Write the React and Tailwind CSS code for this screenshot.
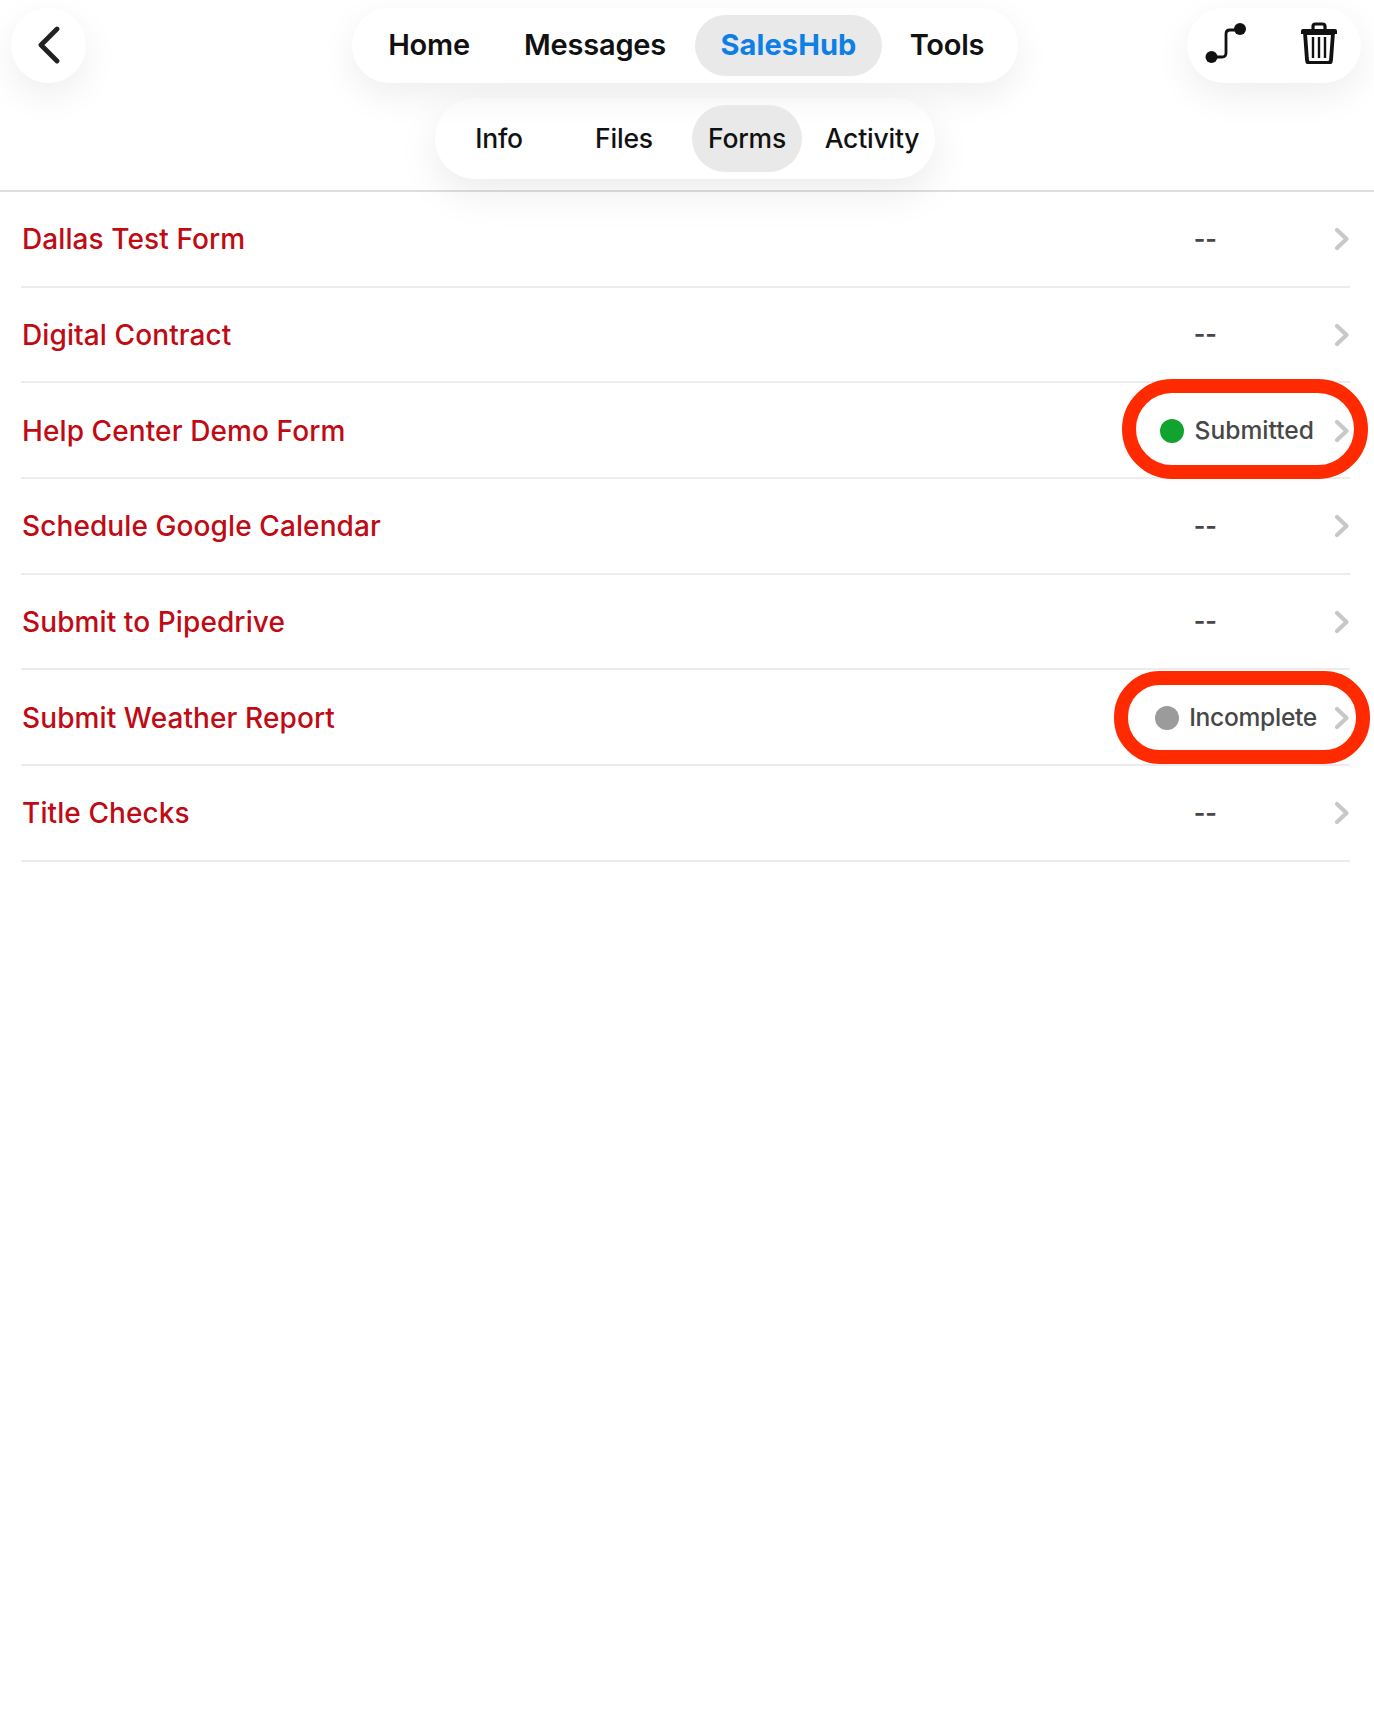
import React from "react";

const forms = [
  { name: "Dallas Test Form", status: null },
  { name: "Digital Contract", status: null },
  { name: "Help Center Demo Form", status: "Submitted", dot: "bg-[#10a32f]", gap: "mr-[20px]" },
  { name: "Schedule Google Calendar", status: null },
  { name: "Submit to Pipedrive", status: null },
  { name: "Submit Weather Report", status: "Incomplete", dot: "bg-[#9b9b9b] mr-[10px]", gap: "mr-[17px] tracking-[-0.3px]" },
  { name: "Title Checks", status: null },
];

const Chevron = () => (
  <svg width="16" height="24" viewBox="0 0 16 24" fill="none" className="shrink-0">
    <path d="M3 3 L12.5 12 L3 21" stroke="#c8c8c8" strokeWidth="4.2" strokeLinecap="round" strokeLinejoin="round" />
  </svg>
);

const RouteIcon = () => (
  <svg width="42" height="42" viewBox="0 0 42 42" fill="none">
    <circle cx="6.5" cy="35" r="6" fill="#111" />
    <circle cx="35" cy="7" r="6" fill="#111" />
    <path d="M6 35 H17 Q21 35 21 31 V12 Q21 8 25 8 H35" stroke="#111" strokeWidth="2.8" fill="none" />
  </svg>
);

const TrashIcon = () => (
  <svg width="38" height="42" viewBox="0 0 38 42" fill="none">
    <path d="M13 7 V4.5 Q13 2 15.5 2 H22.5 Q25 2 25 4.5 V7" stroke="#111" strokeWidth="3.2" />
    <path d="M1 9 Q1 7 3 7 H35 Q37 7 37 9 V12 H1 Z" fill="#111" />
    <path d="M5 11 H33 L31 38 Q30.8 41 28 41 H10 Q7.2 41 7 38 Z" stroke="#111" strokeWidth="3.8" fill="#fff" />
    <path d="M13 15 V36 M19 15 V36 M25 15 V36" stroke="#111" strokeWidth="2.4" />
  </svg>
);

export default function App() {
  return (
    <div className="relative min-h-[1730px] bg-white font-['Inter','Liberation_Sans',sans-serif] overflow-hidden">
      <header className="relative h-[192px] border-b-2 border-[#dedede]">
        <div className="flex items-start pt-2 pl-[11px]">
          <button className="flex h-[75px] w-[75px] items-center justify-center rounded-full bg-white pb-[2px] shadow-[0_12px_36px_rgba(0,0,0,0.07)]">
            <svg width="26" height="38" viewBox="0 0 26 38" fill="none">
              <path d="M21 3 L5 19 L21 35" stroke="#222" strokeWidth="4.8" strokeLinecap="round" strokeLinejoin="round" />
            </svg>
          </button>
          <nav className="ml-[266px] flex h-[75px] w-[666px] items-center rounded-[38px] bg-white pb-[1px] pl-[11px] text-[29px] font-semibold tracking-[-0.2px] text-[#111] shadow-[0_12px_36px_rgba(0,0,0,0.07)]">
            <span className="w-[132px] text-center">Home</span>
            <span className="w-[200px] text-center tracking-[-0.2px]">Messages</span>
            <span className="flex h-[61px] w-[187px] items-center justify-center rounded-[31px] bg-[#e9e9e9] font-bold tracking-[0.1px] text-[#0d7fe6]">SalesHub</span>
            <span className="w-[130px] text-center">Tools</span>
          </nav>
          <div className="ml-[169px] flex h-[75px] w-[174px] items-center rounded-[38px] bg-white pb-[5px] pl-[18px] shadow-[0_12px_36px_rgba(0,0,0,0.07)]">
            <RouteIcon />
            <span className="ml-[53px]"><TrashIcon /></span>
          </div>
        </div>
        <div className="ml-[435px] mt-[15px] flex h-[81px] w-[500px] items-center rounded-[40px] bg-white pl-[4px] text-[26.5px] font-medium tracking-[-0.2px] text-[#111] shadow-[0_14px_40px_rgba(0,0,0,0.08)]">
          <span className="w-[120px] text-center">Info</span>
          <span className="w-[130px] text-center">Files</span>
          <span className="ml-[3px] flex h-[67px] w-[110px] items-center justify-center rounded-[34px] bg-[#e9e9e9]">Forms</span>
          <span className="ml-[7px] w-[126px] text-center">Activity</span>
        </div>
      </header>

      <ul className="pl-[21px] pr-[24px]">
        {forms.map((form) => (
          <li key={form.name} className="flex h-[95.7px] items-center border-b-2 border-[#ececec] pt-[1px]">
            <span className="flex-1 pl-[1px] text-[28px] font-medium tracking-[0.1px] text-[#c00a14]">{form.name}</span>
            {form.status ? (
              <span className={`flex items-center text-[24.6px] font-medium text-[#474747] ${form.gap}`}>
                <span className={`h-[24px] w-[24px] rounded-full ${form.dot} ${form.status === "Submitted" ? "mr-[11px]" : ""}`} />
                {form.status}
              </span>
            ) : (
              <span className="mr-[117px] text-[25px] font-semibold text-[#474747]">--</span>
            )}
            <Chevron />
          </li>
        ))}
      </ul>

      {/* red annotation rings drawn over the screenshot */}
      <div className="absolute left-[1122px] top-[379px] h-[100px] w-[246px] rounded-[50px] border-[14px] border-[#ff2a00]" />
      <div className="absolute left-[1114px] top-[671px] h-[93px] w-[256px] rounded-[46px] border-[14px] border-[#ff2a00]" />
    </div>
  );
}
